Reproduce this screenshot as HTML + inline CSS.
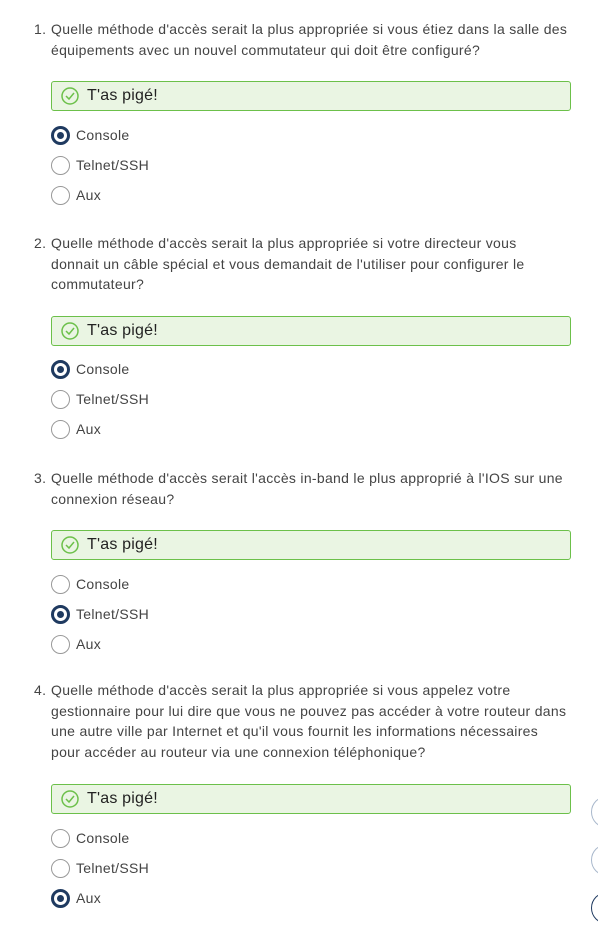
<!DOCTYPE html><html><head><meta charset="utf-8"><style>
body{margin:0;width:598px;height:932px;background:#fff;font-family:"Liberation Sans",sans-serif;color:#444;font-size:14px;letter-spacing:0.3px;position:relative;overflow:hidden}
.a{position:absolute;white-space:nowrap;line-height:20.5px}
.q{left:51px}
.n{left:34px}
.box{position:absolute;left:51px;width:518px;height:28px;background:#eaf5e3;border:1px solid #6cc04a;border-radius:3px}
.box span{position:absolute;left:35px;top:5px;font-size:16px;color:#222;letter-spacing:0.2px}
.box svg{position:absolute;left:9px;top:5px}
.r{position:absolute;left:51px;width:17px;height:17px;border:1px solid #999;border-radius:50%}
.r.s{border:3px solid #1f3a60;width:13px;height:13px}
.r.s:after{content:"";position:absolute;left:3px;top:3px;width:7px;height:7px;border-radius:50%;background:#1f3a60}
.l{left:76px}
.c{position:absolute;left:591px;width:30px;height:30px;border:1px solid #a9b8cc;border-radius:50%}
</style></head><body>
<div class="a n" style="top:19px">1.</div>
<div class="a q" style="top:19px">Quelle méthode d'accès serait la plus appropriée si vous étiez dans la salle des<br>équipements avec un nouvel commutateur qui doit être configuré?</div>
<div class="box" style="top:81px"><svg width="18" height="18"><circle cx="9" cy="9" r="8" fill="none" stroke="#6cc04a" stroke-width="1.5"/><path d="M5 9l3 3 5-6" fill="none" stroke="#6cc04a" stroke-width="1.5"/></svg><span>T'as pigé!</span></div>
<div class="r s" style="top:126px"></div><div class="a l" style="top:125px">Console</div>
<div class="r" style="top:156px"></div><div class="a l" style="top:155px">Telnet/SSH</div>
<div class="r" style="top:186px"></div><div class="a l" style="top:185px">Aux</div>

<div class="a n" style="top:233px">2.</div>
<div class="a q" style="top:233px">Quelle méthode d'accès serait la plus appropriée si votre directeur vous<br>donnait un câble spécial et vous demandait de l'utiliser pour configurer le<br>commutateur?</div>
<div class="box" style="top:316px"><svg width="18" height="18"><circle cx="9" cy="9" r="8" fill="none" stroke="#6cc04a" stroke-width="1.5"/><path d="M5 9l3 3 5-6" fill="none" stroke="#6cc04a" stroke-width="1.5"/></svg><span>T'as pigé!</span></div>
<div class="r s" style="top:360px"></div><div class="a l" style="top:359px">Console</div>
<div class="r" style="top:390px"></div><div class="a l" style="top:389px">Telnet/SSH</div>
<div class="r" style="top:420px"></div><div class="a l" style="top:419px">Aux</div>

<div class="a n" style="top:468px">3.</div>
<div class="a q" style="top:468px">Quelle méthode d'accès serait l'accès in-band le plus approprié à l'IOS sur une<br>connexion réseau?</div>
<div class="box" style="top:530px"><svg width="18" height="18"><circle cx="9" cy="9" r="8" fill="none" stroke="#6cc04a" stroke-width="1.5"/><path d="M5 9l3 3 5-6" fill="none" stroke="#6cc04a" stroke-width="1.5"/></svg><span>T'as pigé!</span></div>
<div class="r" style="top:575px"></div><div class="a l" style="top:574px">Console</div>
<div class="r s" style="top:605px"></div><div class="a l" style="top:604px">Telnet/SSH</div>
<div class="r" style="top:635px"></div><div class="a l" style="top:634px">Aux</div>

<div class="a n" style="top:680px">4.</div>
<div class="a q" style="top:680px">Quelle méthode d'accès serait la plus appropriée si vous appelez votre<br>gestionnaire pour lui dire que vous ne pouvez pas accéder à votre routeur dans<br>une autre ville par Internet et qu'il vous fournit les informations nécessaires<br>pour accéder au routeur via une connexion téléphonique?</div>
<div class="box" style="top:784px"><svg width="18" height="18"><circle cx="9" cy="9" r="8" fill="none" stroke="#6cc04a" stroke-width="1.5"/><path d="M5 9l3 3 5-6" fill="none" stroke="#6cc04a" stroke-width="1.5"/></svg><span>T'as pigé!</span></div>
<div class="r" style="top:829px"></div><div class="a l" style="top:828px">Console</div>
<div class="r" style="top:859px"></div><div class="a l" style="top:858px">Telnet/SSH</div>
<div class="r s" style="top:889px"></div><div class="a l" style="top:888px">Aux</div>

<div class="c" style="top:796px"></div>
<div class="c" style="top:844px"></div>
<div class="c" style="top:892px;border-color:#1f3a60"></div>
</body></html>
